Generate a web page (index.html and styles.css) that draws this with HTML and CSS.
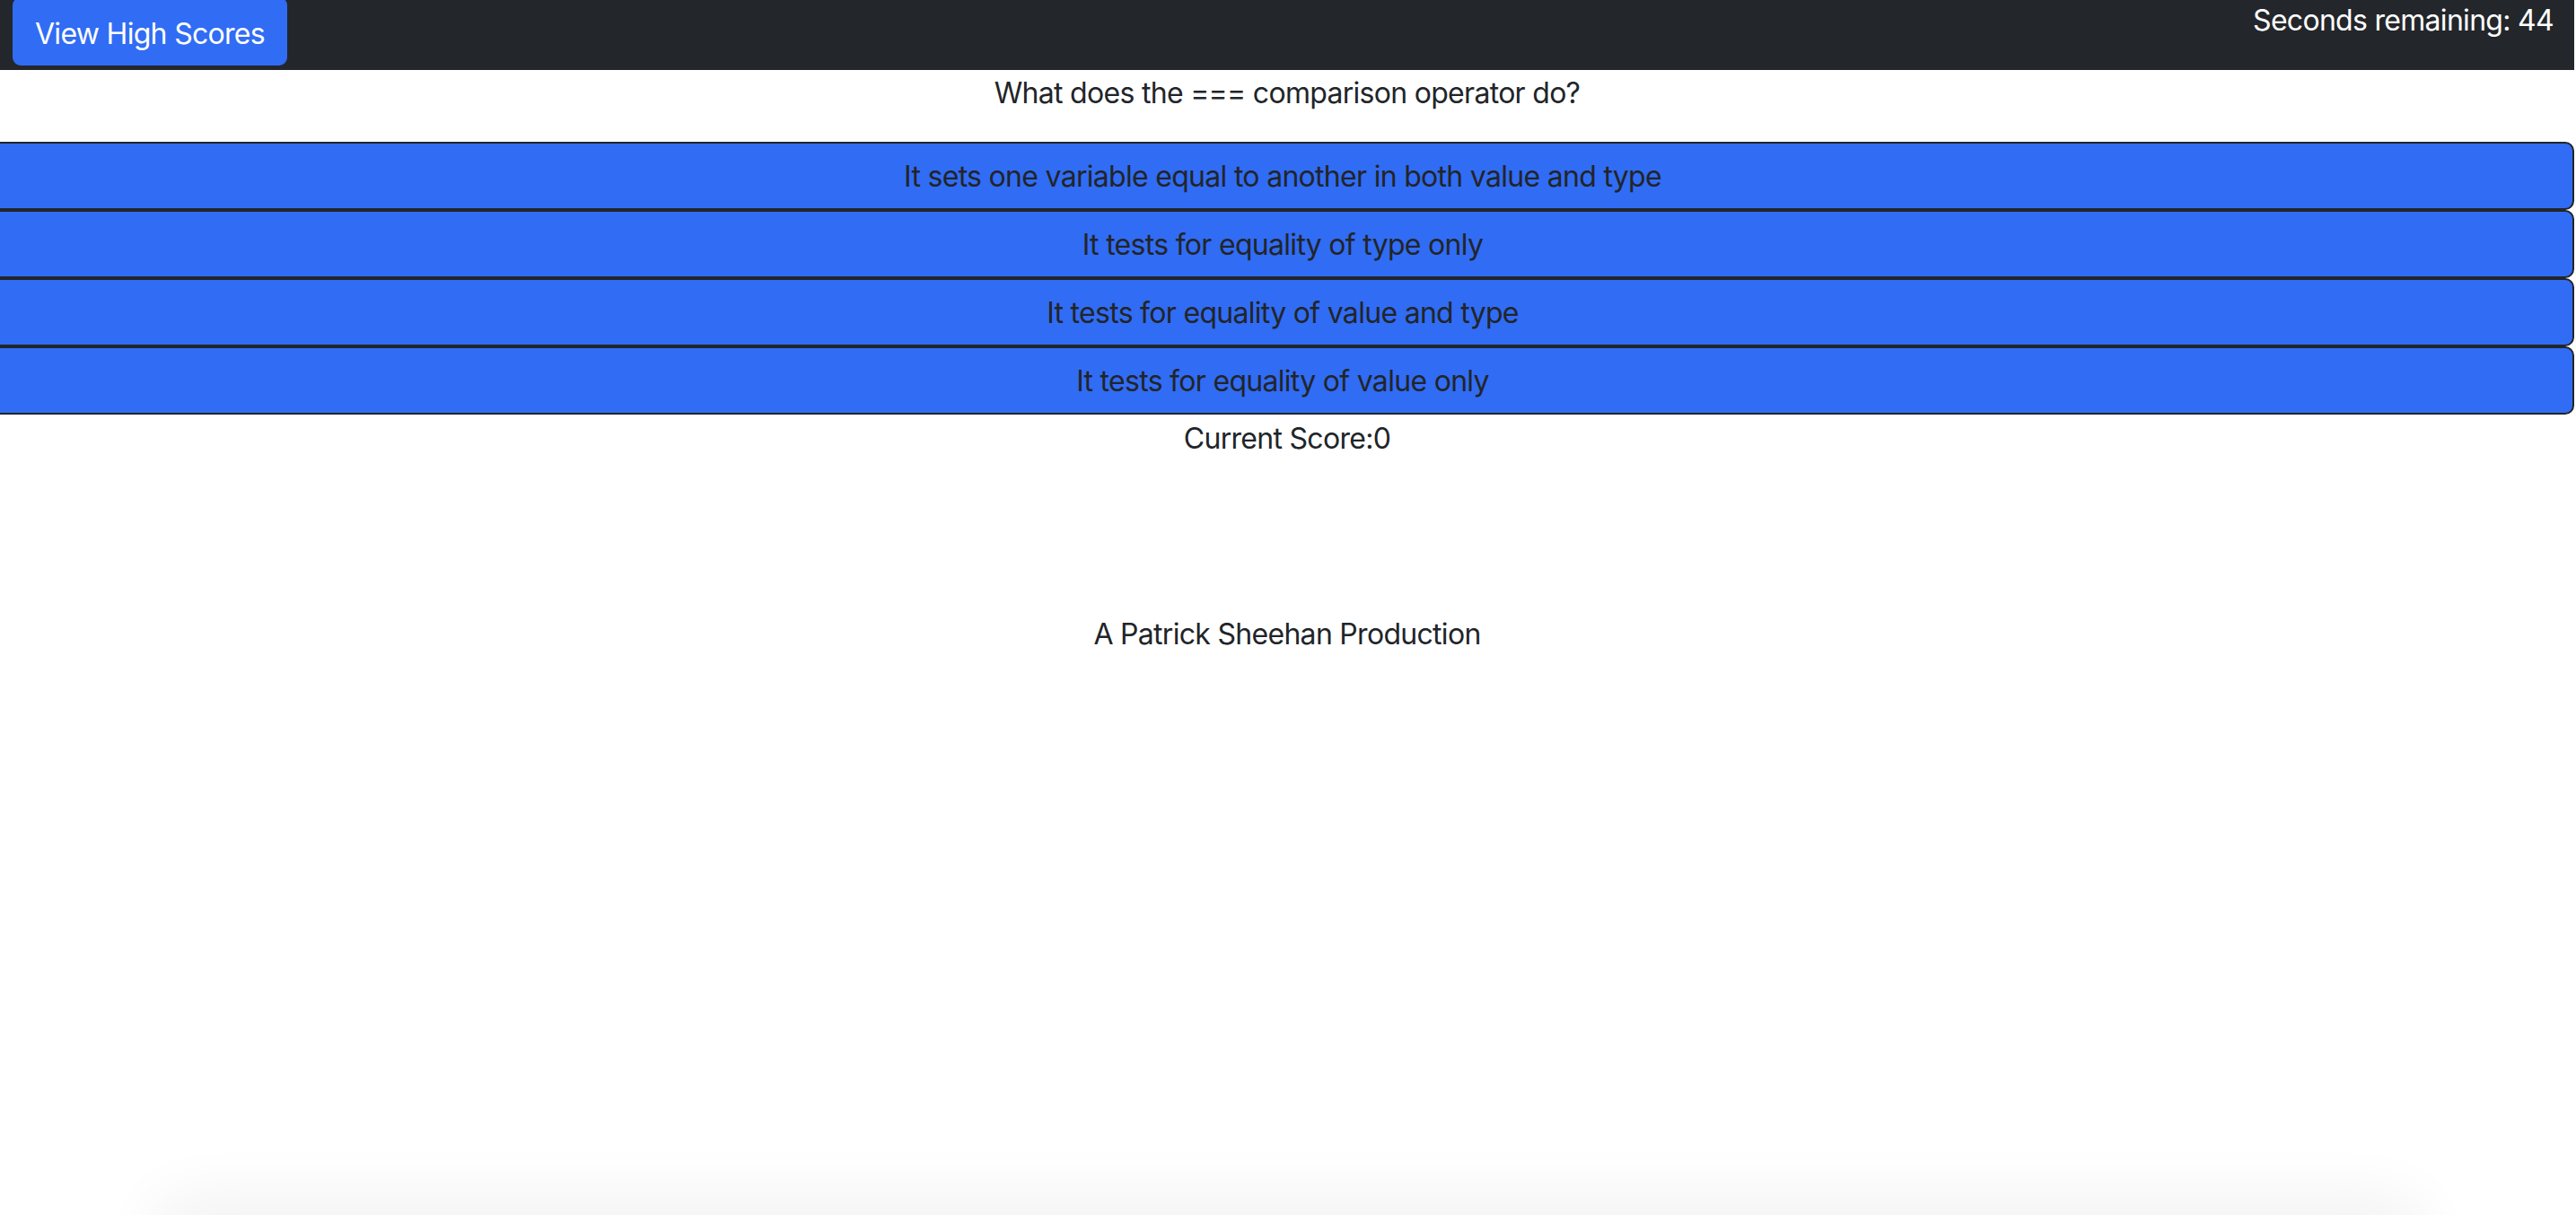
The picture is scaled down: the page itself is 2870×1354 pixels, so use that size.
FILE: index.html
```html
<!DOCTYPE html>
<html lang="en">
<head>
<meta charset="utf-8">
<title>Code Quiz</title>
<link rel="stylesheet" href="styles.css">
</head>
<body>
<nav class="navbar">
  <button class="btn-scores" type="button">View High Scores</button>
  <div class="timer">Seconds remaining: 44</div>
</nav>
<main class="quiz">
  <p class="question">What does the === comparison operator do?</p>
  <div class="answers">
    <button class="answer" type="button">It sets one variable equal to another in both value and type</button>
    <button class="answer" type="button">It tests for equality of type only</button>
    <button class="answer" type="button">It tests for equality of value and type</button>
    <button class="answer" type="button">It tests for equality of value only</button>
  </div>
  <p class="score">Current Score:0</p>
  <footer class="credit">A Patrick Sheehan Production</footer>
</main>
<div class="bottom-fog"></div>
</body>
</html>
```
FILE: styles.css
```css
html {
  background: #ffffff;
}
body {
  margin: 0 2px 0 0;
  font-family: Inter, "Liberation Sans", sans-serif;
  font-size: 32px;
  line-height: 1.5;
  letter-spacing: -0.022em;
  color: #212529;
  background: #ffffff;
  overflow: hidden;
  height: 1354px;
}
.navbar {
  display: flex;
  justify-content: space-between;
  align-items: flex-start;
  height: 78px;
  background: #23262a;
}
.btn-scores {
  margin: -3px 0 0 14px;
  height: 76px;
  padding: 15px 23px 9px;
  border: 2px solid #316cf4;
  border-radius: 9px;
  background: #316cf4;
  color: #ffffff;
  font-family: inherit;
  font-size: 32px;
  line-height: 1.5;
  letter-spacing: inherit;
}
.timer {
  margin-right: 23px;
  color: #ffffff;
  line-height: 1.15;
  padding-top: 5px;
}
.quiz {
  text-align: center;
}
.question {
  margin: 0 0 30px;
  padding-top: 2px;
}
.answers {
  display: flex;
  flex-direction: column;
  margin-left: -10px;
}
.answer {
  display: block;
  width: 100%;
  padding: 13px 24px 11px;
  border: 2px solid #212529;
  border-radius: 10px;
  background: #316cf4;
  color: #212529;
  font-family: inherit;
  font-size: 32px;
  line-height: 1.5;
  letter-spacing: inherit;
  text-align: center;
}
.score {
  margin: 0;
  padding-top: 3px;
}
.credit {
  margin-top: 170px;
}
.bottom-fog {
  position: fixed;
  left: 190px;
  right: 190px;
  bottom: -60px;
  height: 60px;
  border-radius: 60px;
  box-shadow: 0 0 60px 30px rgba(0, 0, 0, 0.045);
}
```
